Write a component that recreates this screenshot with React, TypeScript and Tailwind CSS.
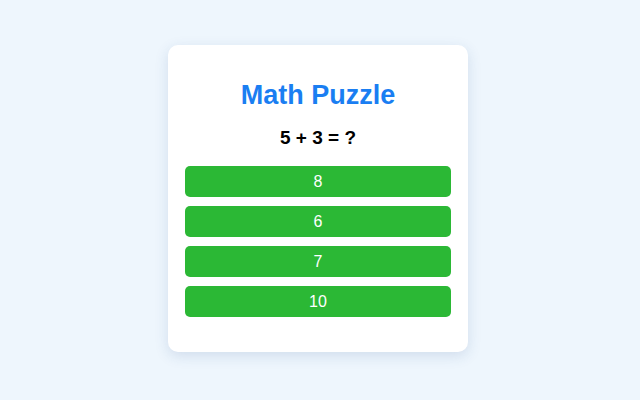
const choices = [8, 6, 7, 10];

export default function App() {
  return (
    <div className="flex h-[400px] w-[640px] items-center justify-center bg-[#eef6fd] pr-[4px] pb-[3px] font-['Liberation_Sans',Arial,sans-serif]">
      <div className="flex w-[300px] flex-col rounded-[10px] bg-white px-[17px] pt-[34px] pb-[35px] shadow-[0_4px_14px_rgba(40,80,140,0.15)]">
        <h1 className="h-[32px] text-center text-[27px] leading-[32px] font-bold text-[#1a7ef2]">
          Math Puzzle
        </h1>
        <p className="mt-[15px] h-[24px] text-center text-[19px] leading-[24px] font-bold text-black">
          5 + 3 = ?
        </p>
        <div className="mt-[16px] flex flex-col gap-[9px]">
          {choices.map((n) => (
            <button
              key={n}
              className="h-[31px] w-full rounded-[5px] bg-[#2bb835] text-[16px] text-white"
            >
              {n}
            </button>
          ))}
        </div>
      </div>
    </div>
  );
}
